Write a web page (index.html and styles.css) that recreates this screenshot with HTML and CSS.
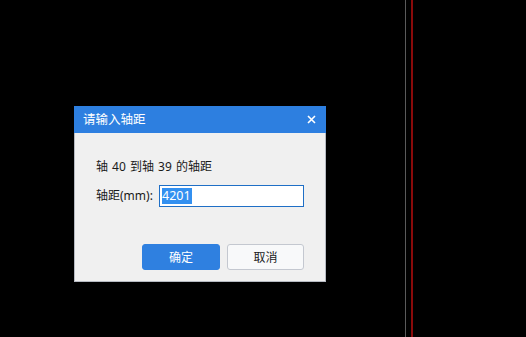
FILE: index.html
```html
<!DOCTYPE html>
<html>
<head>
<meta charset="utf-8">
<link rel="stylesheet" href="styles.css">
</head>
<body>
<div class="canvas">
  <div class="line gray"></div>
  <div class="line red"></div>
  <div class="dialog">
    <div class="titlebar">
      <span class="title">请输入轴距</span>
      <svg class="close" width="9" height="9" viewBox="0 0 9 9"><path d="M1 1L8 8M8 1L1 8" stroke="#fff" stroke-width="1.6"/></svg>
    </div>
    <div class="body">
      <div class="msg">轴 40 到轴 39 的轴距</div>
      <div class="row">
        <span class="label">轴距(mm):</span>
        <div class="input"><span class="sel">4201</span></div>
      </div>
      <div class="buttons">
        <div class="btn primary">确定</div>
        <div class="btn">取消</div>
      </div>
    </div>
  </div>
</div>
</body>
</html>
```
FILE: styles.css
```css
html, body {
  margin: 0;
  padding: 0;
  background: #000;
}
body {
  font-family: "Noto Sans", "Noto Sans CJK SC", sans-serif;
  font-size: 12px;
}
.canvas {
  position: relative;
  width: 526px;
  height: 337px;
  overflow: hidden;
  background: #000;
}
.line {
  position: absolute;
  top: 0;
  bottom: 0;
}
.line.gray {
  left: 405px;
  width: 1px;
  background: #5a5a5a;
}
.line.red {
  left: 411px;
  width: 2px;
  background: #8a0a0a;
}
.dialog {
  position: absolute;
  left: 74px;
  top: 106px;
  width: 252px;
  height: 176px;
  box-sizing: border-box;
  background: #f0f0f0;
  border: 1px solid #b6bac2;
  border-top: none;
  display: flex;
  flex-direction: column;
}
.titlebar {
  height: 27px;
  margin: 0 -1px;
  background: #2d7fe0;
  color: #fff;
  display: flex;
  align-items: center;
  justify-content: space-between;
  padding: 0 10px 0 9px;
  font-size: 12.5px;
}
.title {
  line-height: 16px;
}
.close {
  display: block;
}
.body {
  flex: 1;
  display: flex;
  flex-direction: column;
  padding: 26px 21px 11px 21px;
  color: #1a1a1a;
}
.msg {
  line-height: 16px;
  height: 16px;
  word-spacing: 1px;
}
.row {
  margin-top: 10px;
  display: flex;
  align-items: center;
  height: 22px;
}
.label {
  width: 63px;
  line-height: 16px;
}
.input {
  width: 145px;
  height: 22px;
  box-sizing: border-box;
  border: 1px solid #1f6fc6;
  background: #fff;
  display: flex;
  align-items: center;
  padding-left: 2px;
}
.sel {
  background: #3390f0;
  color: #fff;
  line-height: 16px;
  font-size: 12.5px;
  padding-right: 1px;
}
.buttons {
  margin-top: auto;
  display: flex;
  justify-content: flex-end;
  gap: 7px;
}
.btn {
  width: 77px;
  height: 26px;
  box-sizing: border-box;
  border: 1px solid #c4c8d0;
  border-radius: 3px;
  background: #f8f9fa;
  display: flex;
  align-items: center;
  justify-content: center;
  color: #1a1a1a;
}
.btn.primary {
  width: 78px;
  background: #2f80e0;
  border-color: #2f80e0;
  color: #fff;
}
```
